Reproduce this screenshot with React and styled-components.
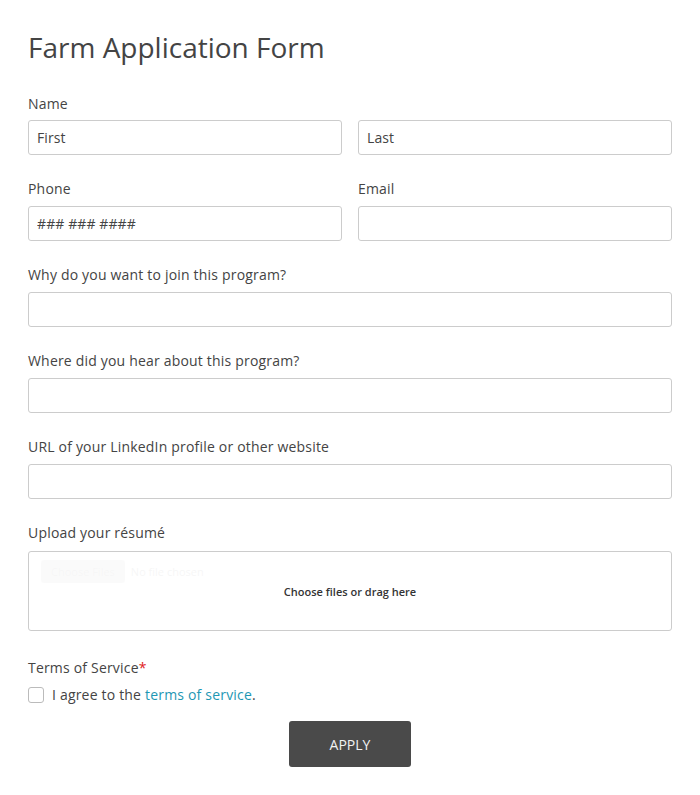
import styled, { createGlobalStyle } from "styled-components";

const GlobalStyle = createGlobalStyle`
  * { box-sizing: border-box; }
  body {
    margin: 0;
    background: #fff;
    font-family: "Open Sans", "Liberation Sans", sans-serif;
    color: #444;
  }
`;

const Page = styled.form`
  padding: 25px 28px 28px;
`;

const Title = styled.h1`
  margin: 0 0 25px;
  font-size: 28px;
  font-weight: 400;
  line-height: 44px;
  color: #444;
`;

const Row = styled.div`
  display: grid;
  grid-template-columns: 1fr 1fr;
  gap: 16px;
  margin-bottom: ${(props) => (props.inner ? "0" : "24px")};
`;

const Field = styled.div`
  display: flex;
  flex-direction: column;
  margin-bottom: ${(props) => props.gap ?? "24px"};
`;

const Label = styled.label`
  font-size: 14px;
  line-height: 20px;
  letter-spacing: 0.19px;
  margin-bottom: ${(props) => props.space ?? "7px"};
  color: #444;
`;

const Required = styled.span`
  color: #e02020;
`;

const Input = styled.input`
  height: 35px;
  width: 100%;
  padding: 0 8px;
  border: 1px solid #ccc;
  border-radius: 3px;
  font-family: inherit;
  font-size: 14px;
  letter-spacing: 0.1px;
  color: #444;
  outline: none;
  &::placeholder {
    color: #444;
  }
`;

const Upload = styled.div`
  position: relative;
  height: 80px;
  margin-top: 1px;
  border: 1px solid #ccc;
  border-radius: 3px;
  display: flex;
  align-items: center;
  justify-content: center;
`;

const HiddenFile = styled.div`
  position: absolute;
  top: 8px;
  left: 12px;
  display: flex;
  align-items: center;
  gap: 6px;
  opacity: 0.03;
  font-size: 11px;
  color: #000;
`;

const FakeButton = styled.span`
  background: #888;
  border-radius: 3px;
  padding: 4px 10px;
`;

const DropText = styled.span`
  font-size: 11px;
  font-weight: 600;
  color: #333;
`;

const CheckRow = styled.label`
  display: flex;
  align-items: center;
  gap: 8px;
  font-size: 14px;
  line-height: 20px;
  letter-spacing: 0.19px;
  color: #444;
`;

const Box = styled.span`
  width: 16px;
  height: 16px;
  border: 1px solid #bbb;
  border-radius: 3px;
  background: #fff;
`;

const Link = styled.a`
  color: #1e97b4;
  text-decoration: none;
`;

const Actions = styled.div`
  display: flex;
  justify-content: center;
  margin-top: 16px;
`;

const Button = styled.button`
  width: 122px;
  height: 46px;
  border: none;
  border-radius: 3px;
  background: #4a4a4a;
  color: #f2f2f2;
  font-family: inherit;
  font-size: 14px;
  cursor: pointer;
`;

const App = () => {
  return (
    <>
      <GlobalStyle />
      <Page onSubmit={(e) => e.preventDefault()}>
        <Title>Farm Application Form</Title>
        <Field>
          <Label space="6px">Name</Label>
          <Row inner>
            <Input placeholder="First" />
            <Input placeholder="Last" />
          </Row>
        </Field>
        <Row>
          <Field gap="0">
            <Label>Phone</Label>
            <Input placeholder="### ### ####" />
          </Field>
          <Field gap="0">
            <Label>Email</Label>
            <Input />
          </Field>
        </Row>
        <Field>
          <Label>Why do you want to join this program?</Label>
          <Input />
        </Field>
        <Field>
          <Label>Where did you hear about this program?</Label>
          <Input />
        </Field>
        <Field>
          <Label>URL of your LinkedIn profile or other website</Label>
          <Input />
        </Field>
        <Field gap="27px">
          <Label>Upload your résumé</Label>
          <Upload>
            <HiddenFile>
              <FakeButton>Choose Files</FakeButton>
              <span>No file chosen</span>
            </HiddenFile>
            <DropText>Choose files or drag here</DropText>
          </Upload>
        </Field>
        <Field gap="0">
          <Label>
            Terms of Service<Required>*</Required>
          </Label>
          <CheckRow>
            <Box />
            <span>
              I agree to the <Link href="#">terms of service</Link>.
            </span>
          </CheckRow>
        </Field>
        <Actions>
          <Button type="submit">APPLY</Button>
        </Actions>
      </Page>
    </>
  );
};

export default App;
